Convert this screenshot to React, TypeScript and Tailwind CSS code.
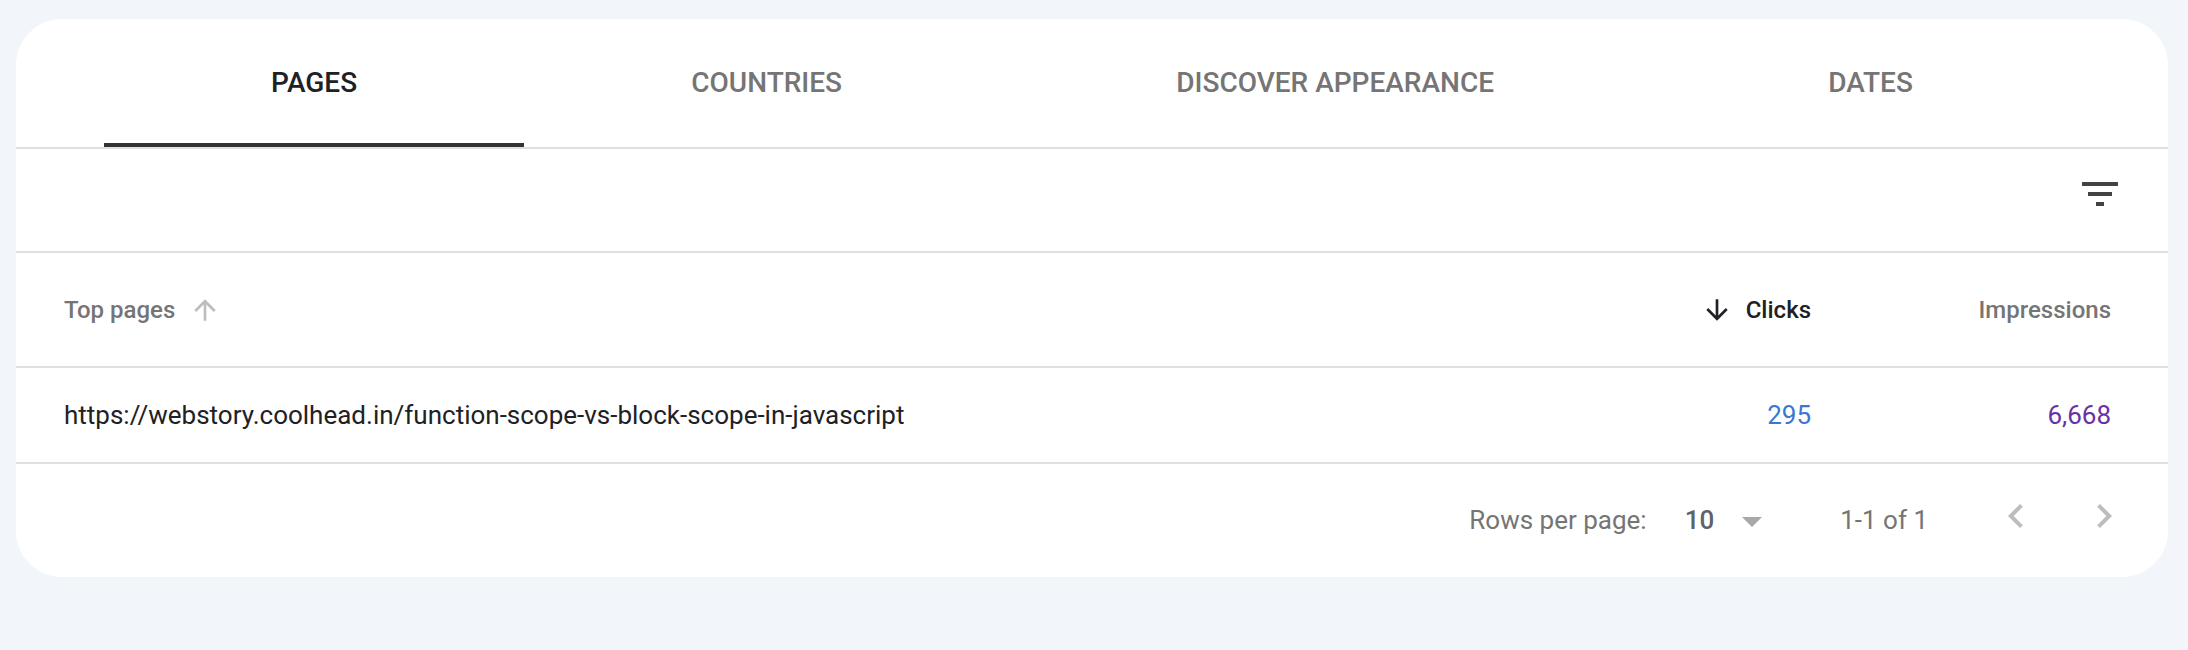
import React from "react";

const tabs = [
  { label: "PAGES", active: true },
  { label: "COUNTRIES", active: false },
  { label: "DISCOVER APPEARANCE", active: false },
  { label: "DATES", active: false },
];

function ArrowUp({ className }: { className?: string }) {
  return (
    <svg viewBox="0 0 24 24" className={className} fill="currentColor">
      <path d="M4 12l1.41 1.41L11 7.83V20h2V7.83l5.58 5.59L20 12l-8-8-8 8z" />
    </svg>
  );
}

function ArrowDown({ className }: { className?: string }) {
  return (
    <svg viewBox="0 0 24 24" className={className} fill="currentColor">
      <path d="M20 12l-1.41-1.41L13 16.17V4h-2v12.17l-5.58-5.59L4 12l8 8 8-8z" />
    </svg>
  );
}

export default function App() {
  return (
    <div className="min-h-[650px] w-full bg-[#f2f5fa] pt-[19px] pl-[16px] pr-[20px] font-['Roboto',sans-serif]">
      <div className="w-[2152px] overflow-hidden rounded-[46px] bg-white">
        {/* Tabs */}
        <div className="flex h-[130px] border-b-2 border-[#e0e0e0] px-[88px]">
          {tabs.map((t) => (
            <div
              key={t.label}
              className="relative flex h-[128px] flex-auto items-center justify-center"
            >
              <span
                className={
                  "text-[28px] font-medium leading-none " +
                  (t.active ? "text-[#202124]" : "text-[#757575]")
                }
              >
                {t.label}
              </span>
              {t.active && (
                <div className="absolute bottom-0 left-0 right-0 h-[4px] bg-[#333333]" />
              )}
            </div>
          ))}
        </div>

        {/* Toolbar */}
        <div className="flex h-[104px] items-start justify-end border-b-2 border-[#e0e0e0] pr-[44px] pt-[21px]">
          <svg viewBox="0 0 24 24" className="h-[48px] w-[48px] text-[#424242]" fill="currentColor">
            <path d="M10 18h4v-2h-4v2zM3 6v2h18V6H3zm3 7h12v-2H6v2z" />
          </svg>
        </div>

        {/* Header row */}
        <div className="flex h-[115px] items-center border-b-2 border-[#e0e0e0] pl-[48px] pr-[57px]">
          <div className="flex flex-1 items-center">
            <span className="text-[24px] font-medium text-[#757575]">Top pages</span>
            <ArrowUp className="ml-[14px] h-[32px] w-[32px] text-[#bdbdbd]" />
          </div>
          <div className="flex w-[300px] items-center justify-end">
            <ArrowDown className="mr-[13px] h-[32px] w-[32px] text-[#202124]" />
            <span className="text-[24px] font-medium text-[#202124]">Clicks</span>
          </div>
          <div className="flex w-[300px] items-center justify-end">
            <span className="text-[24px] font-medium text-[#757575]">Impressions</span>
          </div>
        </div>

        {/* Data row */}
        <div className="flex h-[96px] items-center border-b-2 border-[#e0e0e0] pl-[48px] pr-[57px]">
          <div className="flex-1 text-[26px] text-[#202124]">
            https://webstory.coolhead.in/function-scope-vs-block-scope-in-javascript
          </div>
          <div className="w-[300px] text-right text-[26px] text-[#3a77d5]">295</div>
          <div className="w-[300px] text-right text-[26px] text-[#6930a8]">6,668</div>
        </div>

        {/* Footer */}
        <div className="flex h-[113px] items-center justify-end pr-[40px]">
          <span className="text-[26px] text-[#757575]">Rows per page:</span>
          <span className="ml-[38px] text-[26px] font-medium text-[#5f6368]">10</span>
          <svg viewBox="0 0 24 24" className="ml-[14px] h-[48px] w-[48px] text-[#a8a8a8]" fill="currentColor">
            <path d="M7 10l5 5 5-5z" />
          </svg>
          <span className="ml-[64px] text-[26px] text-[#757575]">1-1 of 1</span>
          <svg viewBox="0 0 24 24" className="mb-[9px] ml-[64px] h-[48px] w-[48px] text-[#bdbdbd]" fill="currentColor">
            <path d="M15.41 7.41L14 6l-6 6 6 6 1.41-1.41L10.83 12z" />
          </svg>
          <svg viewBox="0 0 24 24" className="mb-[9px] ml-[40px] h-[48px] w-[48px] text-[#bdbdbd]" fill="currentColor">
            <path d="M10 6L8.59 7.41 13.17 12l-4.58 4.59L10 18l6-6z" />
          </svg>
        </div>
      </div>
    </div>
  );
}
